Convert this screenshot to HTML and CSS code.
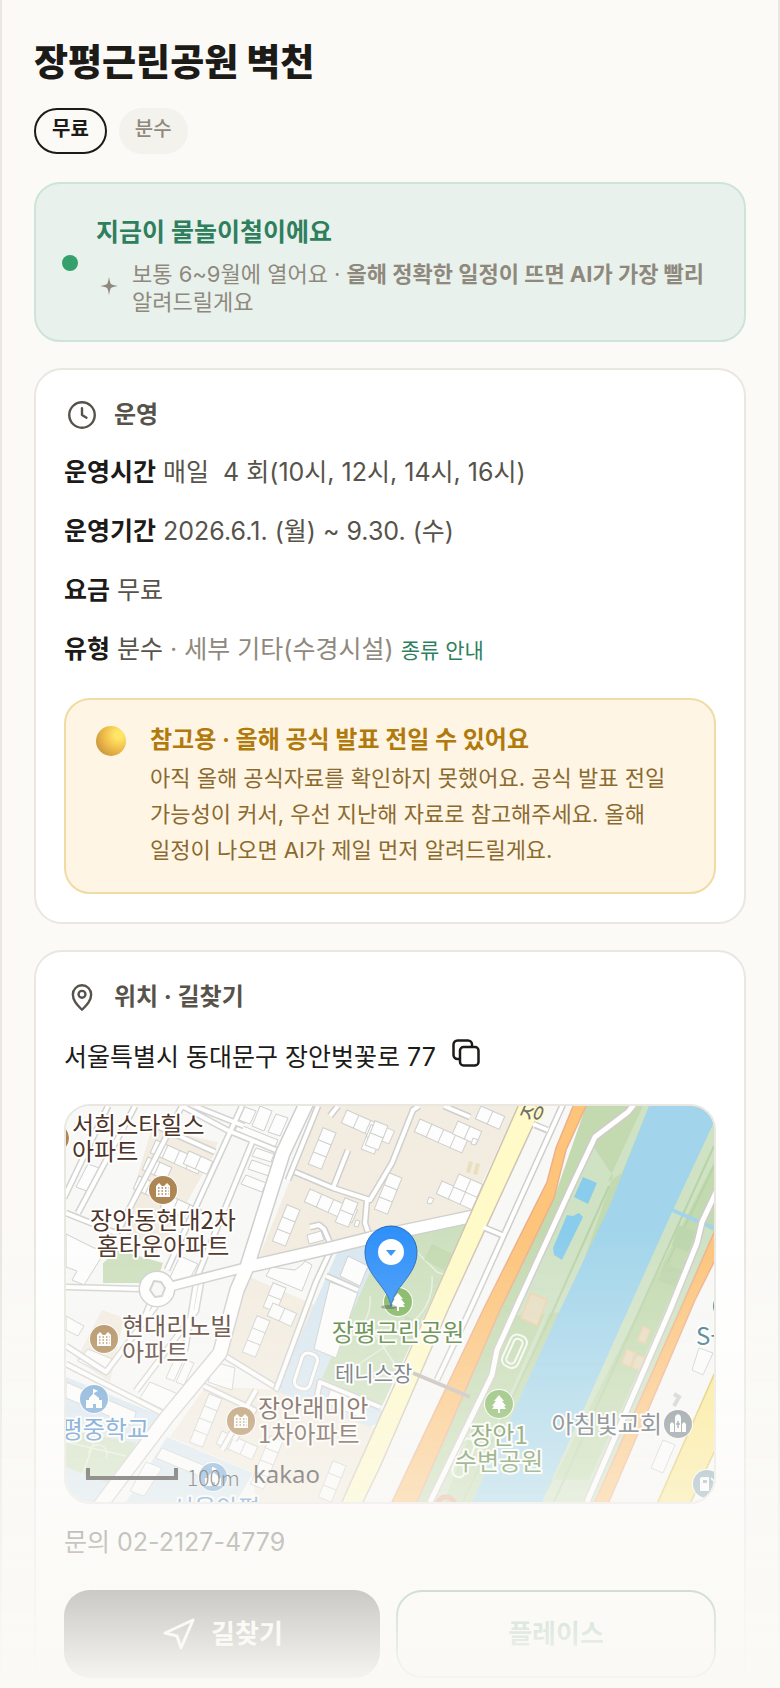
FILE: index.html
```html
<!DOCTYPE html>
<html lang="ko">
<head>
    <meta charset="UTF-8">
    <meta name="viewport" content="width=device-width, initial-scale=1.0">
    <title>장평근린공원 벽천</title>
    <link rel="stylesheet" href="styles.css">
</head>
<body>
    <main class="app">
        <h1 class="title">장평근린공원 벽천</h1>
        <div class="chips">
            <span class="chip chip-on">무료</span>
            <span class="chip">분수</span>
        </div>

        <section class="season">
            <span class="season-dot"></span>
            <div class="season-body">
                <h2>지금이 물놀이철이에요</h2>
                <div class="season-note">
                    <svg width="26" height="26" viewBox="0 0 26 26"><path fill="currentColor" d="M13 2q1 6 2 7t7 2q-6 1-7 2t-2 7q-1-6-2-7t-7-2q6-1 7-2t2-7z"/></svg>
                    <p>보통 6~9월에 열어요 · <b>올해 정확한 일정이 뜨면 AI가 가장 빨리</b> 알려드릴게요</p>
                </div>
            </div>
        </section>

        <!-- 운영 정보 -->
        <section class="card">
            <h2 class="card-head">
                <svg class="icon" width="36" height="36" viewBox="0 0 24 24"><circle cx="12" cy="12" r="8.5"/><path d="M12 7.5V12l3 1.8"/></svg>
                운영
            </h2>
            <div class="rows">
                <p><b>운영시간</b> 매일&nbsp; 4 회(10시, 12시, 14시, 16시)</p>
                <p><b>운영기간</b> 2026.6.1. (월) ~ 9.30. (수)</p>
                <p><b>요금</b> 무료</p>
                <p><b>유형</b> 분수 <span class="muted">· 세부 기타(수경시설)</span> <a href="#types" class="more">종류 안내</a></p>
            </div>
            <div class="notice">
                <span class="ball"></span>
                <div>
                    <h3>참고용 · 올해 공식 발표 전일 수 있어요</h3>
                    <p>아직 올해 공식자료를 확인하지 못했어요. 공식 발표 전일 가능성이 커서, 우선 지난해 자료로 참고해주세요. 올해 일정이 나오면 AI가 제일 먼저 알려드릴게요.</p>
                </div>
            </div>
        </section>

        <!-- 위치 -->
        <section class="card">
            <h2 class="card-head">
                <svg class="icon" width="36" height="36" viewBox="0 0 24 24"><path d="M12 20.5C8.500 17 5.900 14.300 5.900 10.300a6.100 6.100 0 0 1 12.200 0c0 4-2.600 6.700-6.100 10.200z"/><circle cx="12" cy="10.200" r="2.300"/></svg>
                위치 · 길찾기
            </h2>
            <div class="address">
                <span>서울특별시 동대문구 장안벚꽃로 77</span>
                <button type="button" class="copy" aria-label="주소 복사">
                    <svg width="28" height="28" viewBox="0 0 28 28"><rect x="8" y="8" width="18.5" height="18.5" rx="3.5"/><path d="M8 20H5.500a4 4 0 0 1-4-4V5.500a4 4 0 0 1 4-4H16a4 4 0 0 1 4 4V8"/></svg>
                </button>
            </div>

            <div class="map">
                <svg viewBox="0 0 648 396" preserveAspectRatio="xMidYMid slice">
                    <defs>
                        <path id="r2" d="M0 0h13v14H0zM13 0h13v14H13z"/>
                        <path id="r3" d="M0 0h13v14H0zM13 0h13v14H13zM26 0h13v14H26z"/>
                        <path id="r4" d="M0 0h13v14H0zM13 0h13v14H13zM26 0h13v14H26zM39 0h13v14H39z"/>
                        <g id="apt">
                            <circle r="15" fill="#fff"/><circle r="14" fill="#ad8653"/>
                            <path fill="#fff" d="M-7 7V-4l3-3 3 3h2l3-3 3 3V7z"/>
                            <path stroke="#ad8653" stroke-width="1.5" stroke-dasharray="1.5 2" d="M-5-2H6M-5 1H6M-5 4H6"/>
                        </g>
                        <g id="school">
                            <circle r="15" fill="#fff"/><circle r="14" fill="#6ba2d6"/>
                            <path fill="#fff" d="M-8 9V1h3v-2l4-4v-5h1l4 2-4 2v1l5 4v2h3v8H2V5h-3v4z"/>
                        </g>
                        <g id="tree">
                            <circle r="15" fill="#fff"/><circle r="14" fill="#7db45c"/>
                            <path fill="#fff" d="M0-9l5 6H3l4 5H5l2 3H1v4h-2V5h-6l2-3h-2l4-5h-2z"/>
                        </g>
                        <path id="alleys" d="M69 0L12 107M42 0L-2 92M116 0L51 127M176 0L101 164M187 34L131 171l-12 74M116 0l45 24 56 23M84 17l65 29M0 107l50 20M128 0l50 20M0 258l98 50M0 240l40 26 50-66M70 285l60-80 6-34M154 247l60 37M138 280l50 24-20 30M190 284l-34 60M0 181l74 2M85 195l-10 25"/>
                        <path id="lanes" d="M222 74l30-74M229 66l38 16 37 12 22-37 21-53 6-4M301 94l-2 23 5 15M282 44l-15 38M244 121l9-2 5 4 6 14M264 10l8-10M378 0l26 11M264 146l-14 30-40 108M260 170l32 14M314 301l-60-25-4 20"/>
                        <path id="mainroad" d="M241 -4l-24 51-36 114-10 23-17 63-53 64-68 90"/>
                        <path id="crossroad" d="M181 161l83-19 40-10 104-22"/>
                        <path id="trail" d="M570 -4l-8 10-33 25-25 53-55 120-18 40-5 25-62 127M652 82l-16 34-5 21-27 67-83 192"/>
                    </defs>

                    <rect width="648" height="396" fill="#f8f8f7"/>

                    <!-- 단지와 학교 -->
                    <g fill="#f3ece0">
                        <path d="M254 0h198l-50 107-209 44z"/>
                        <path d="M86 22l66 14-5 14-52 92-40-17z"/>
                        <path d="M184 171l76 33-52 80-54-34z"/>
                        <path d="M140 280l70 4 104 40-38 72h-86l-4-30-82-35z"/>
                        <path d="M36 204l22 8-14 64-34-22z"/>
                    </g>
                    <g fill="#d8e7f1">
                        <path d="M271 147l36-13 14 24-7 143 6 12-16 8-94-36z"/>
                        <path d="M0 271l98 40-58 85H0zM101 331l86 36-17 29H60z"/>
                    </g>
                    <g fill="#cde0be">
                        <path d="M306 162l14-32 84-18-88 188-60-28z"/>
                        <path d="M52 144l45 13-3 9-20 11H37v-20zM0 324l70 13-22 42-48-18z"/>
                    </g>
                    <path fill="none" stroke="#fff" stroke-opacity=".5" stroke-width="1.5" d="M351 146l20 20 22 8M366 170q2 30-22 48M304 190q2 24-18 40M0 336l60 14M30 330l-14 40M40 352a9 9 0 1 0-17-4M290 260l60-40M330 260l-30-45"/>
                    <path fill="#b8d4a3" opacity=".5" d="M366 138l20 10-8 16-20-10zM340 210l24 10-10 22-24-10z"/>

                    <!-- 건물 -->
                    <g fill="#fdfdfd" stroke="#cfcfcd">
                        <use href="#r4" transform="translate(281 4) rotate(24)"/>
                        <use href="#r2" transform="translate(318 24) rotate(112)"/>
                        <use href="#r3" transform="translate(270 27) rotate(112)"/>
                        <use href="#r4" transform="translate(244 83) rotate(24)"/>
                        <use href="#r2" transform="translate(292 97) rotate(112)"/>
                        <use href="#r3" transform="translate(234 104) rotate(112)"/>
                        <use href="#r3" transform="translate(336 72) rotate(112)"/>
                        <use href="#r4" transform="translate(354 13) rotate(24)"/>
                        <use href="#r2" transform="translate(392 15) rotate(24)"/>
                        <use href="#r2" transform="translate(415 0) rotate(24)"/>
                        <use href="#r3" transform="translate(376 75) rotate(24)"/>
                        <use href="#r2" transform="translate(393 68) rotate(24)"/>
                        <use href="#r2" transform="translate(322 20) rotate(112)"/>
                        <use href="#r4" transform="translate(90 34) rotate(24)"/>
                        <use href="#r2" transform="translate(123 45) rotate(24)"/>
                        <use href="#r2" transform="translate(82 51) rotate(24)"/>
                        <use href="#r2" transform="translate(73 70) rotate(24)"/>
                        <use href="#r3" transform="translate(100 88) rotate(24)"/>
                        <use href="#r2" transform="translate(220 182) rotate(112)"/>
                        <use href="#r2" transform="translate(207 197) rotate(24)"/>
                        <use href="#r3" transform="translate(204 215) rotate(112)"/>
                        <use href="#r4" transform="translate(156 293) rotate(112)"/>
                        <use href="#r3" transform="translate(156 325) rotate(24)"/>
                        <use href="#r4" transform="translate(217 335) rotate(112)"/>
                        <use href="#r3" transform="translate(280 360) rotate(112)"/>
                        <path d="M241 129l14-4 3 9-15 4zM290 114l4 1-2 6-4-1zM407 32l5 2-3 5-4-1zM363 91l5 2-3 5-4-1z"/>
                        <path d="M176 0l14 5-6 13-14-5zM194 0l12 5-8 20-12-5zM210 8l12 4-8 18-12-4zM172 18l40 16-4 9-40-16z"/>
                        <path d="M190 42l18 6-3 8-19-6zM186 54l20 7-3 9-21-7zM180 69l20 8-4 9-21-8z"/>
                        <path d="M205 161l24 3 8-6 2-3 7 4-10 26-36-15zM282 150l20 10-8 20-20-10zM264 176l28 10-22 66-22-9z"/>
                        <path d="M22 58l14 5-10 24-16-6zM0 128l28 14 12 2-22 35-12-5 5-9-11-4zM114 150l18 8-8 14-24 8z"/>
                        <path d="M0 210l18 10-6 10-12-6zM84 276l28 12-10 18-28-14zM110 250l8 3-10 22-8-3zM120 254l8 3-10 22-8-3zM0 276l70 30-3 14-67-28zM96 342l60 25-6 10-60-25zM80 356l16 6-18 28-14-5z"/>
                        <path d="M149 256l20 6-3 22-24-8zM266 278l36 14-6 20-36-15zM22 243l24 10-6 16-28-14zM633 242l14 5-10 22-11-5zM597 334l12 5-12 28-12-5z"/>
                    </g>
                    <path fill="#e8e0bd" d="M403 55l4 1-3 11-4-1zM410 57l4 1-3 11-4-1z"/>

                    <!-- 골목길 -->
                    <g fill="none" stroke-linejoin="round">
                        <use href="#alleys" stroke="#d3d3d1" stroke-width="7"/>
                        <use href="#alleys" stroke="#fff" stroke-width="4"/>
                        <use href="#lanes" stroke="#cfcfcd" stroke-width="7"/>
                        <use href="#lanes" stroke="#fff" stroke-width="4"/>
                        <rect x="232" y="247" width="16" height="36" rx="6" transform="rotate(18 240 265)" stroke="#d3d3d1" stroke-width="5"/>
                        <rect x="232" y="247" width="16" height="36" rx="6" transform="rotate(18 240 265)" stroke="#fff" stroke-width="3"/>
                    </g>

                    <!-- 큰길 -->
                    <g fill="none" stroke-linejoin="round">
                        <use href="#mainroad" stroke="#d0cfce" stroke-width="16"/>
                        <path stroke="#d0cfce" stroke-width="11" d="M106 180l75-19"/>
                        <use href="#crossroad" stroke="#d0cfce" stroke-width="14"/>
                        <circle cx="91" cy="183" r="12" stroke="#d0cfce" stroke-width="13"/>
                        <use href="#mainroad" stroke="#fff" stroke-width="13"/>
                        <path stroke="#fff" stroke-width="8" d="M103 181l78-20"/>
                        <use href="#crossroad" stroke="#fff" stroke-width="11"/>
                        <circle cx="91" cy="183" r="12" stroke="#fff" stroke-width="10"/>
                        <path fill="#f8f8f7" stroke="#d0cfce" stroke-width="2" d="M88 175l7 1 4 6-3 8-7 1-5-7z"/>
                    </g>

                    <!-- 하천과 둔치 -->
                    <path fill="#c3dab0" d="M520 0h128v130L529 396H350l84-192 54-112z"/>
                    <path fill="#cfe2c4" d="M522 54l15 6q7 5 5 16l14-9L583 0h-6l-38 82-80 180-60 134h10l88-190-56 4-16 50-22 60-40 76h34l100-230zM441 230l86-190 20 30-45 130-96 196h-28z"/>
                    <path fill="#cfe2c4" d="M648 16v40L476 396h53l40-90 79-180-10-6-31 66-44 100-40 88h-46l120-250z"/>
                    <path fill="none" stroke="#b9d3a8" stroke-width="2" d="M543 80l-60 134-86 182M648 40L580 190l-92 206M648 60L600 160"/>
                    <path fill="#a2d5eb" d="M583 0h54q11 6 11 16l-41 88-45 100-86 192h-70l88-192 50-105z"/>
                    <path fill="none" stroke="#a2d5eb" stroke-width="4" d="M606 104l42 18"/>
                    <path fill="#8accec" d="M517 71l14 6-9 21-14-7zM501 109l6 1 6-3 4 4-21 43-8-5-1-7z"/>
                    <path fill="#bdd6ad" d="M612 119l17 7-7 20-16-7zM599 157l17 7-7 17-17-6z"/>
                    <path fill="#e6dcc0" stroke="#f2cfaa" stroke-width="1.5" d="M465 187l16 7-10 25-16-7zM577 221l7 3-5 13-7-3zM561 244l8 3-5 13-8-3zM571 249l8 3-5 12-8-3z"/>
                    <g fill="none" stroke="#f7faf4" stroke-width="2">
                        <rect x="440" y="228" width="17" height="34" rx="7" transform="rotate(24 448 245)"/>
                        <rect x="444" y="232" width="9" height="26" rx="4" transform="rotate(24 448 245)"/>
                        <rect x="391" y="332" width="13" height="40" rx="6" transform="rotate(20 398 352)"/>
                    </g>
                    <g fill="none" stroke-linejoin="round">
                        <use href="#trail" stroke="#cfccca" stroke-width="8"/>
                        <use href="#trail" stroke="#fff" stroke-width="5"/>
                    </g>
                    <path fill="#fdc47a" stroke="#eeb08c" stroke-width="1.5" d="M508-2l-18 44-9 34-64 128-92 194h25l84-194 54-112 12-48 21-46zM650 122l-36 82-86 194h14l87-204 21-42z"/>
                    <path fill="#fffac8" stroke="#cfc5b4" stroke-width="1.5" d="M453-2l-91 206-48 107-39 87h21l18-37 68-157 95-206z"/>
                    <path fill="#fde98e" stroke="#dbc55c" stroke-width="1.5" d="M650 264l-59 134h33l26-56z"/>
                    <g fill="none">
                        <path stroke="#d0cfce" stroke-width="7" d="M469 19l12 5M419 122l17 7"/>
                        <path stroke="#d0cfce" stroke-width="7" d="M498 -4l-94 208-33 70"/>
                        <path stroke="#fff" stroke-width="4" d="M467 18l15 6M417 121l19 8M498 -4l-94 208-33 70"/>
                        <path stroke="#c2b9b5" stroke-width="4" d="M347 267l57 24"/>
                        <path stroke="#ccc" stroke-width="4" d="M608 300l5-9-5-3"/>
                        <circle cx="380" cy="400" r="9" stroke="#e6a890" stroke-width="5"/>
                    </g>

                    <!-- 장소 -->
                    <use href="#apt" x="-11" y="32"/>
                    <use href="#apt" x="97" y="84"/>
                    <use href="#apt" x="38" y="233"/>
                    <use href="#apt" x="175" y="315"/>
                    <use href="#school" x="28" y="293"/>
                    <use href="#school" x="147" y="371"/>
                    <use href="#tree" x="332" y="196"/>
                    <use href="#tree" x="433" y="298"/>
                    <circle cx="659" cy="200" r="12" fill="#3f7898"/>
                    <g transform="translate(612 318)">
                        <circle r="15" fill="#fff"/><circle r="14" fill="#7b8990"/>
                        <path fill="#fff" d="M-3 8v-14q0-3 3-4 3 1 3 4V8zM-8 8V0l2-2 2 2v8zM4 8V0l2-2 2 2v8z"/>
                        <path stroke="#7b8990" stroke-width="1.5" d="M0-3v7M-2 0h4"/>
                    </g>
                    <g transform="translate(641 378)">
                        <circle r="15" fill="#fff"/><circle r="14" fill="#8aa9b8"/>
                        <path fill="#fff" d="M-7 7V-5q0-2 2-2h7v14z"/><path fill="#8aa9b8" d="M-4-4h4v3h-4z"/>
                        <path fill="none" stroke="#fff" stroke-width="1.5" d="M4-6l3 3v8"/>
                    </g>

                    <g class="labels">
                        <text x="6" y="28">서희스타힐스</text>
                        <text x="6" y="54">아파트</text>
                        <text x="97" y="123" text-anchor="middle">장안동현대2차</text>
                        <text x="97" y="149" text-anchor="middle">홈타운아파트</text>
                        <text x="56" y="229">현대리노빌</text>
                        <text x="56" y="255">아파트</text>
                        <text x="192" y="311">장안래미안</text>
                        <text x="192" y="337">1차아파트</text>
                        <text class="lb-green" x="332" y="235" text-anchor="middle">장평근린공원</text>
                        <text class="lb-green" x="433" y="338" text-anchor="middle">장안1</text>
                        <text class="lb-green" x="433" y="364" text-anchor="middle">수변공원</text>
                        <text class="lb-gray lb-small" x="269" y="275">테니스장</text>
                        <text class="lb-gray" x="596" y="327" text-anchor="end">아침빛교회</text>
                        <text class="lb-teal" x="630" y="239">S-</text>
                        <text class="lb-blue" x="83" y="332" text-anchor="end">평중학교</text>
                        <text class="lb-blue" x="150" y="411" text-anchor="middle">서울안평</text>
                        <text class="lb-road" transform="translate(470 18) rotate(-66)">장</text>
                    </g>

                    <!-- 핀 -->
                    <ellipse cx="323" cy="201" rx="8" ry="2" fill="#333" opacity=".4"/>
                    <path fill="#2f90fa" stroke="#2367bb" d="M325 201c-2-20-26-31-26-55a26 26 0 0 1 52 0c0 24-24 35-26 55z"/>
                    <circle cx="325" cy="146" r="13" fill="#fff"/>
                    <path fill="#2f90fa" d="M320 144h10l-5 6z"/>

                    <path fill="none" stroke="#1c1a18" stroke-width="4" d="M22 362v10h88v-10"/>
                    <text class="scale-text" x="121" y="380">100m</text>
                    <text class="kakao" x="187" y="377">kakao</text>
                </svg>
            </div>

            <p class="phone">문의 02-2127-4779</p>
            <div class="actions">
                <a href="#route" class="btn btn-dark">
                    <svg class="icon" width="36" height="36" viewBox="0 0 36 36"><path d="M32 4L4 17l12 3 4 12z"/></svg>
                    길찾기
                </a>
                <a href="#place" class="btn btn-line">플레이스</a>
            </div>
        </section>
    </main>
    <div class="fade"></div>
</body>
</html>
```
FILE: styles.css
```css
* { box-sizing: border-box; margin: 0; padding: 0; }
body {
    font-family: Inter, "Noto Sans CJK KR", sans-serif;
    font-size: 25px;
    line-height: 40px;
    color: #1c1b18;
    background: #fbfaf7;
    word-break: keep-all;
}
a { text-decoration: none; }
.app {
    height: 100vh;
    overflow: hidden;
    padding: 36px 32px 0;
    border: solid #e9e7e0;
    border-width: 0 2px;
}
.icon { flex: none; fill: none; stroke: currentColor; stroke-width: 1.6; stroke-linecap: round; stroke-linejoin: round; }

.title { font-size: 37px; line-height: 54px; font-weight: 800; }
.chips { display: flex; gap: 12px; margin: 18px 0 28px; }
.chip {
    padding: 9px 16px 13px;
    border-radius: 23px;
    font-size: 20px;
    line-height: 24px;
    font-weight: 500;
    color: #8f897d;
    background: #f3f2ed;
}
.chip-on { padding: 7px 16px 11px; border: 2px solid #1c1b18; font-weight: 700; color: #1c1b18; background: none; }

.season {
    display: flex;
    align-items: center;
    gap: 18px;
    padding: 26px 26px 24px;
    border: 2px solid #cde4d8;
    border-radius: 26px;
    background: #e8f1ec;
}
.season-dot { flex: none; width: 16px; height: 16px; border-radius: 50%; background: #35a06c; }
.season h2 { font-size: 25px; line-height: 44px; color: #2f7f5e; }
.season-note { display: flex; align-items: center; gap: 10px; margin-top: 6px; color: #8f897d; }
.season-note svg { flex: none; }
.season-note p { font-size: 22px; line-height: 28px; }

.card {
    margin-top: 26px;
    padding: 28px;
    border: 2px solid #e9e7e0;
    border-radius: 28px;
    background: #fff;
}
.card-head {
    display: flex;
    align-items: center;
    gap: 14px;
    height: 34px;
    margin-bottom: 20px;
    font-size: 24px;
    color: #57534a;
}
.rows { display: grid; gap: 19px; color: #57534a; }
.rows b { color: #1c1b18; }
.muted { color: #8f897d; }
.more { font-size: 21px; color: #2f7f5e; }
.notice {
    display: flex;
    gap: 24px;
    margin-top: 27px;
    padding: 22px 30px 24px;
    border: 2px solid #f0dba5;
    border-radius: 26px;
    background: #fff5e5;
}
.ball {
    flex: none;
    width: 30px;
    height: 30px;
    margin-top: 4px;
    border-radius: 50%;
    background: radial-gradient(circle at 75% 30%, #ffe667 0 12%, #f0bf4c 45%, #d19d40 75%, #d68a6c);
}
.notice h3 { margin-bottom: 2px; font-size: 24px; line-height: 36px; color: #b07a0c; }
.notice p { font-size: 22px; line-height: 36px; color: #8a6a2f; }

.address { display: flex; align-items: center; gap: 16px; height: 46px; }
.copy { padding-bottom: 8px; border: 0; background: none; line-height: 0; color: #1c1b18; }
.copy svg { fill: none; stroke: currentColor; stroke-width: 2.5; }
.map { margin-top: 24px; border: 2px solid #e9e7e0; border-radius: 26px; overflow: hidden; }
.map svg { display: block; width: 100%; }
.labels text { font: 400 24px "Noto Sans CJK KR", sans-serif; fill: #4e3428; stroke: #fff; stroke-width: 4px; stroke-linejoin: round; paint-order: stroke; }
.labels .lb-green { fill: #4a7a30; }
.labels .lb-gray { fill: #4a5560; }
.labels .lb-teal { fill: #35708a; }
.labels .lb-blue { fill: #3f82c8; }
.labels .lb-road { fill: #6f6f6f; stroke: #fffac8; }
.labels .lb-small { font-size: 21px; }
.scale-text { font: 300 21px "Noto Sans CJK KR", sans-serif; fill: #1c1a18; }
.kakao { font: 400 24px "Noto Sans", sans-serif; fill: #1c1a18; }

.phone { margin-top: 18px; color: #57534a; }
.actions { display: flex; gap: 16px; margin-top: 28px; }
.btn {
    display: flex;
    flex: 1;
    align-items: center;
    justify-content: center;
    gap: 14px;
    height: 88px;
    border-radius: 26px;
    font-size: 26px;
    font-weight: 700;
}
.btn .icon { stroke-width: 3; }
.btn-dark { color: #fff; background: #1c1b18; }
.btn-line { border: 2px solid #2f7f5e; color: #2f7f5e; }

/* 아래쪽 흐림 */
.fade {
    position: fixed;
    inset: auto 0 0;
    height: 460px;
    background: linear-gradient(rgba(250, 249, 245, 0), #faf9f5);
    pointer-events: none;
}
```
